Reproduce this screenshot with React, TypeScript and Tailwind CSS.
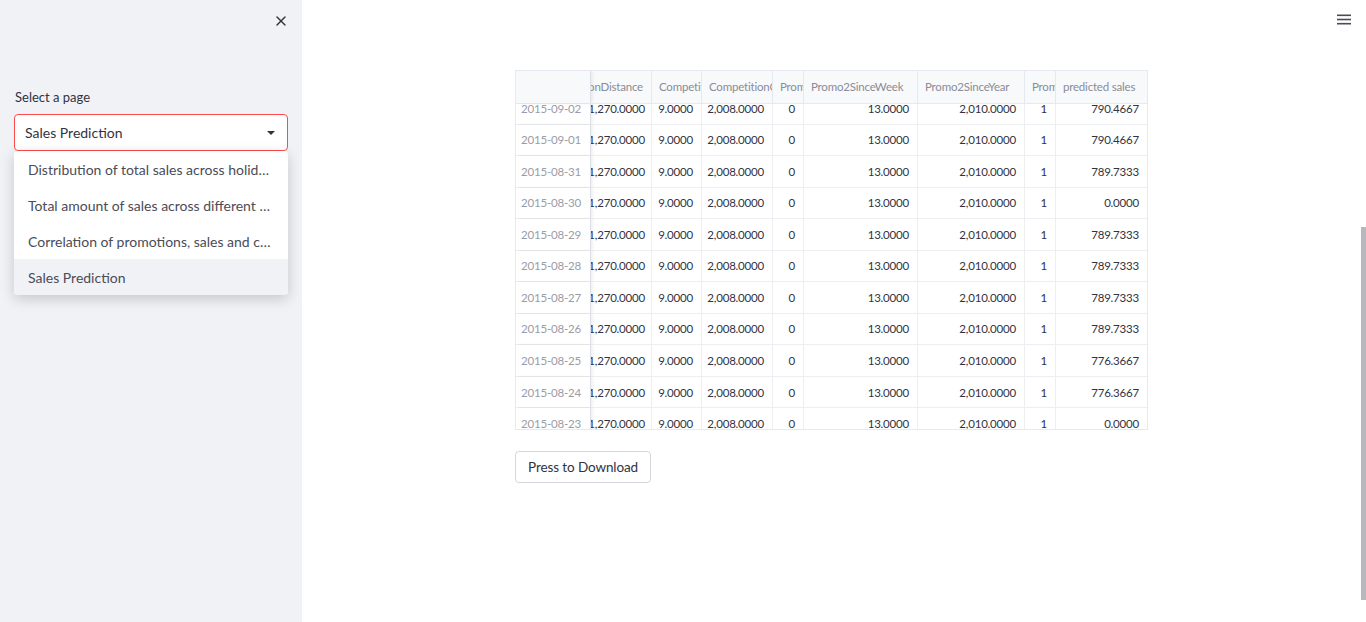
import React from "react";
import { X } from "lucide-react";

const dates = [
  "2015-09-02",
  "2015-09-01",
  "2015-08-31",
  "2015-08-30",
  "2015-08-29",
  "2015-08-28",
  "2015-08-27",
  "2015-08-26",
  "2015-08-25",
  "2015-08-24",
  "2015-08-23",
];

const predicted = [
  "790.4667",
  "790.4667",
  "789.7333",
  "0.0000",
  "789.7333",
  "789.7333",
  "789.7333",
  "789.7333",
  "776.3667",
  "776.3667",
  "0.0000",
];

// widths of the visible part of each data column
const columns = [
  { name: "CompetitionDistance", w: "w-[61px]", clipLeft: true },
  { name: "CompetitionOpenSinceMonth", w: "w-[50px]" },
  { name: "CompetitionOpenSinceYear", w: "w-[71px]" },
  { name: "Promo", w: "w-[31px]" },
  { name: "Promo2SinceWeek", w: "w-[114px]" },
  { name: "Promo2SinceYear", w: "w-[107px]" },
  { name: "Promo2", w: "w-[31px]" },
  { name: "predicted sales", w: "w-[92px]" },
];

const options = [
  "Distribution of total sales across holidays and weekdays",
  "Total amount of sales across different store types",
  "Correlation of promotions, sales and customers",
  "Sales Prediction",
];

function DataTable() {
  return (
    <div className="relative w-[633px] h-[360px] overflow-hidden border border-[#e6e9ef] text-[11.5px] tracking-[-0.2px]">
      {/* header sits over the scrolled rows */}
      <div className="absolute top-0 left-0 right-0 z-10 flex h-[33px] bg-[#f8f9fb] border-b border-[#e6e9ef] text-[#8a8c97]">
        <div className="w-[75px] shrink-0 bg-[#f8f9fb] border-r border-[#dcdfe6] shadow-[2px_0_3px_rgba(0,0,0,0.06)]" />
        {columns.map((c) => (
          <div
            key={c.name}
            className={`${c.w} shrink-0 flex items-center overflow-hidden whitespace-nowrap border-r border-[#e6e9ef] ${
              c.clipLeft ? "justify-end pr-[8px]" : "pl-[7px]"
            }`}
          >
            {c.name}
          </div>
        ))}
      </div>
      <div className="mt-[22px]">
        {dates.map((d, i) => (
          <div key={d} className="flex h-[31.55px] border-b border-[#eceef2]">
            <div className="w-[75px] shrink-0 flex items-center justify-end pr-[9px] text-[#9a9ca6] bg-white border-r border-[#dcdfe6] shadow-[2px_0_3px_rgba(0,0,0,0.06)] z-[1]">
              {d}
            </div>
            <Cell w="w-[61px]" pad="pr-[6px]">1,270.0000</Cell>
            <Cell w="w-[50px]">9.0000</Cell>
            <Cell w="w-[71px]">2,008.0000</Cell>
            <Cell w="w-[31px]">0</Cell>
            <Cell w="w-[114px]">13.0000</Cell>
            <Cell w="w-[107px]">2,010.0000</Cell>
            <Cell w="w-[31px]">1</Cell>
            <Cell w="w-[92px]">{predicted[i]}</Cell>
          </div>
        ))}
      </div>
    </div>
  );
}

function Cell({
  w,
  pad = "pr-[8px]",
  children,
}: {
  w: string;
  pad?: string;
  children: React.ReactNode;
}) {
  return (
    <div
      className={`${w} ${pad} shrink-0 flex items-center justify-end overflow-hidden whitespace-nowrap text-[#31333f] border-r border-[#eceef2]`}
    >
      {children}
    </div>
  );
}

export default function App() {
  return (
    <div
      className="flex h-[622px] w-full overflow-hidden bg-white text-[#31333f]"
      style={{ fontFamily: "Lato, 'Noto Sans', sans-serif" }}
    >
      <aside className="w-[302px] shrink-0 bg-[#f0f2f6] flex flex-col">
        <div className="flex justify-end pt-[13px] pr-[13px]">
          <X size={16} strokeWidth={2} className="text-[#31333f]" />
        </div>
        <div className="px-[14px] pt-[62px]">
          <div className="text-[13px] leading-none mb-[10px] pl-[1px]">Select a page</div>
          <div className="relative">
            <div className="flex items-center justify-between h-[37px] bg-white border border-[#ff4b4b] rounded-[4px] pl-[10px] pr-[11px] text-[14px]">
              <span>Sales Prediction</span>
              <svg width="10" height="6" viewBox="0 0 10 6">
                <path d="M1 1 L5 5 L9 1 Z" fill="#31333f" />
              </svg>
            </div>
            <ul className="absolute left-0 right-0 top-[37px] bg-white rounded-[4px] shadow-[0_4px_14px_rgba(0,0,0,0.18)] overflow-hidden text-[14px] text-[#4a4c57]">
              {options.map((o, i) => (
                <li
                  key={o}
                  className={`h-[36px] flex items-center px-[14px] ${i === 3 ? "bg-[#f0f2f6]" : ""}`}
                >
                  <span className="truncate">{o}</span>
                </li>
              ))}
            </ul>
          </div>
        </div>
      </aside>

      <main className="relative flex-1">
        <button className="absolute top-[14px] right-[15px]">
          <svg width="14" height="11" viewBox="0 0 14 11">
            <rect x="0" y="0.5" width="14" height="1.6" fill="#4a4b57" />
            <rect x="0" y="4.7" width="14" height="1.6" fill="#4a4b57" />
            <rect x="0" y="8.9" width="14" height="1.6" fill="#4a4b57" />
          </svg>
        </button>
        <div className="absolute right-0 top-[227px] w-[5px] h-[373px] bg-[#b8b8bc]" />
        <div className="flex justify-center pt-[70px]">
          <div className="w-[638px] flex flex-col items-start">
            <DataTable />
            <button className="mt-[21px] h-[32px] px-[12px] border border-[#d3d6dd] rounded-[4px] bg-white text-[13.5px] tracking-[-0.1px] text-[#31333f]">
              Press to Download
            </button>
          </div>
        </div>
      </main>
    </div>
  );
}
